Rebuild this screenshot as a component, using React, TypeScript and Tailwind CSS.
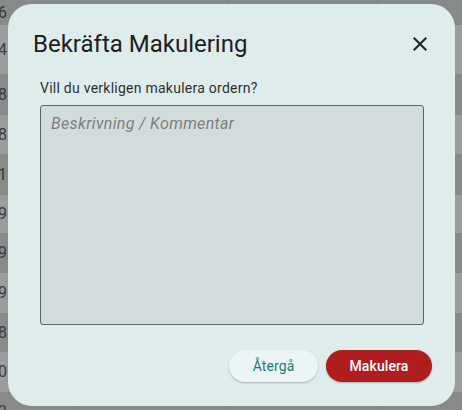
const rows = [
  { h: 'h-[25px]', bg: 'bg-[#878a89]', d: '6', txt: '' },
  { h: 'h-[49px]', bg: 'bg-[#9b9d9c]', d: '4', txt: '' },
  { h: 'h-[41px]', bg: 'bg-[#878a89]', d: '8', txt: '' },
  { h: 'h-[39px]', bg: 'bg-[#9b9d9c]', d: '8', txt: '' },
  { h: 'h-[41px]', bg: 'bg-[#878a89]', d: '1', txt: '' },
  { h: 'h-[38px]', bg: 'bg-[#9b9d9c]', d: '9', txt: '' },
  { h: 'h-[40px]', bg: 'bg-[#878a89]', d: '9', txt: '' },
  { h: 'h-[40px]', bg: 'bg-[#9b9d9c]', d: '9', txt: '' },
  { h: 'h-[39px]', bg: 'bg-[#878a89]', d: '8', txt: '' },
  { h: 'h-[40px]', bg: 'bg-[#9b9d9c]', d: '0', txt: '' },
  { h: 'h-[40px]', bg: 'bg-[#878a89]', d: '2', txt: '12116/T  kvarvarande till' },
];

function CloseIcon() {
  return (
    <svg width="24" height="24" viewBox="0 0 24 24" fill="#222">
      <path d="M19 6.41 17.59 5 12 10.59 6.41 5 5 6.41 10.59 12 5 17.59 6.41 19 12 13.41 17.59 19 19 17.59 13.41 12z" />
    </svg>
  );
}

export default function App() {
  return (
    <div
      className="relative w-[462px] h-[410px] overflow-hidden bg-[#878a89]"
      style={{ fontFamily: 'Roboto, "Liberation Sans", sans-serif' }}
    >
      {/* dimmed table behind the dialog */}
      <div className="flex flex-col">
        {rows.map((r, i) => (
          <div key={i} className={`${r.h} ${r.bg} grid grid-cols-[78px_150px_150px_84px] shrink-0`}>
            <div className="flex items-center justify-start overflow-hidden border-r border-[#7d807f]">
              <span className="text-[16px] text-[#3a3c3c] -ml-[2px]">{r.d}</span>
            </div>
            <div className="border-r border-[#7d807f] flex items-start pt-[13px] pl-[86px] overflow-hidden whitespace-nowrap text-[15px] text-[#2a2c2c]">
              {r.txt}
            </div>
            <div className="border-r border-[#7d807f]" />
            <div />
          </div>
        ))}
      </div>

      {/* dialog */}
      <div className="absolute left-[8px] top-[4px] w-[447px] h-[402px] rounded-[24px] bg-[#deecec] flex flex-col pl-[25px] pr-[23px] pt-[24px] pb-[24px]">
        <div className="flex items-center justify-between">
          <h2 className="text-[24px] leading-[32px] text-[#1e2020] font-normal">Bekräfta Makulering</h2>
          <button className="flex items-center justify-center">
            <CloseIcon />
          </button>
        </div>
        <div className="pl-[7px] pr-[8px] mt-[18px] flex flex-col">
          <p className="text-[14px] leading-[20px] tracking-[0.25px] text-[#2e3131]">Vill du verkligen makulera ordern?</p>
          <textarea
            placeholder="Beskrivning / Kommentar"
            className="mt-[7px] h-[220px] w-full resize-none rounded-[3px] border-[1.5px] border-[#5d6767] bg-[#d3dcdd] px-[10px] py-[6px] text-[16px] leading-[24px] tracking-[0.35px] placeholder:italic placeholder:text-[#7a8080] outline-none"
          />
        </div>
        <div className="mt-auto flex justify-end gap-[8px]">
          <button className="h-[32px] w-[89px] rounded-full bg-[#ebf5f5] text-[14px] tracking-[0.1px] text-[#1d7a78] shadow-[0_1px_2px_rgba(0,0,0,0.25)]">
            Återgå
          </button>
          <button className="h-[32px] w-[106px] rounded-full bg-[#b01d1e] text-[14px] tracking-[0.1px] font-medium text-white shadow-[0_1px_2px_rgba(0,0,0,0.25)]">
            Makulera
          </button>
        </div>
      </div>
    </div>
  );
}
